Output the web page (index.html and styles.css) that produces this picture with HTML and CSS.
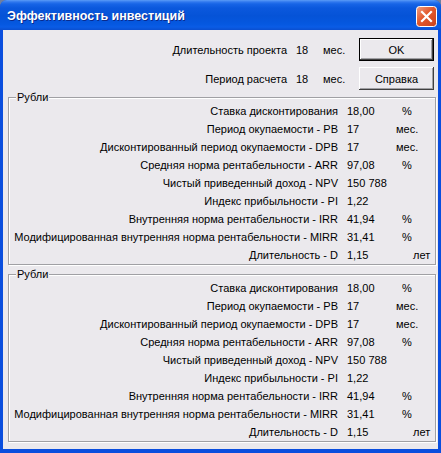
FILE: index.html
```html
<!DOCTYPE html>
<html lang="ru">
<head>
<meta charset="utf-8">
<title>Эффективность инвестиций</title>
<link rel="stylesheet" href="styles.css">
</head>
<body>
<div class="window">
  <div class="titlebar">
    <span class="title">Эффективность инвестиций</span>
    <span class="close">
      <svg width="21" height="21" viewBox="0 0 21 21">
        <defs>
          <linearGradient id="cg" x1="0" y1="0" x2="1" y2="1">
            <stop offset="0" stop-color="#f0a184"/>
            <stop offset="0.45" stop-color="#e2582c"/>
            <stop offset="1" stop-color="#c8421c"/>
          </linearGradient>
        </defs>
        <rect x="0.5" y="0.5" width="20" height="20" rx="3" fill="url(#cg)" stroke="#fff"/>
        <path d="M6 6 L15 15 M15 6 L6 15" stroke="#fff" stroke-width="2.2" stroke-linecap="square"/>
      </svg>
    </span>
  </div>
  <div class="client">
    <div class="top">
      <span class="plabel">Длительность проекта</span><span class="pval">18</span><span class="punit">мес.</span>
      <button class="btn default">OK</button>
      <span class="plabel">Период расчета</span><span class="pval">18</span><span class="punit">мес.</span>
      <button class="btn">Справка</button>
    </div>

    <fieldset class="group">
      <legend>Рубли</legend>
      <div class="rows">
        <span class="lbl">Ставка дисконтирования</span><span class="val">18,00</span><span class="unit pct">%</span>
        <span class="lbl">Период окупаемости - PB</span><span class="val">17</span><span class="unit mes">мес.</span>
        <span class="lbl">Дисконтированный период окупаемости - DPB</span><span class="val">17</span><span class="unit mes">мес.</span>
        <span class="lbl">Средняя норма рентабельности - ARR</span><span class="val">97,08</span><span class="unit pct">%</span>
        <span class="lbl">Чистый приведенный доход - NPV</span><span class="val">150 788</span><span class="unit"></span>
        <span class="lbl">Индекс прибыльности - PI</span><span class="val">1,22</span><span class="unit"></span>
        <span class="lbl">Внутренняя норма рентабельности - IRR</span><span class="val">41,94</span><span class="unit pct">%</span>
        <span class="lbl">Модифицированная внутренняя норма рентабельности - MIRR</span><span class="val">31,41</span><span class="unit pct">%</span>
        <span class="lbl">Длительность - D</span><span class="val">1,15</span><span class="unit let">лет</span>
      </div>
    </fieldset>

    <fieldset class="group second">
      <legend>Рубли</legend>
      <div class="rows">
        <span class="lbl">Ставка дисконтирования</span><span class="val">18,00</span><span class="unit pct">%</span>
        <span class="lbl">Период окупаемости - PB</span><span class="val">17</span><span class="unit mes">мес.</span>
        <span class="lbl">Дисконтированный период окупаемости - DPB</span><span class="val">17</span><span class="unit mes">мес.</span>
        <span class="lbl">Средняя норма рентабельности - ARR</span><span class="val">97,08</span><span class="unit pct">%</span>
        <span class="lbl">Чистый приведенный доход - NPV</span><span class="val">150 788</span><span class="unit"></span>
        <span class="lbl">Индекс прибыльности - PI</span><span class="val">1,22</span><span class="unit"></span>
        <span class="lbl">Внутренняя норма рентабельности - IRR</span><span class="val">41,94</span><span class="unit pct">%</span>
        <span class="lbl">Модифицированная внутренняя норма рентабельности - MIRR</span><span class="val">31,41</span><span class="unit pct">%</span>
        <span class="lbl">Длительность - D</span><span class="val">1,15</span><span class="unit let">лет</span>
      </div>
    </fieldset>
  </div>
</div>
</body>
</html>
```

FILE: styles.css
```css
* { box-sizing: border-box; }

html, body {
  margin: 0;
  padding: 0;
  background: #6f7f9f;
}

.window {
  width: 441px;
  height: 453px;
  display: flex;
  flex-direction: column;
  border-radius: 7px 7px 0 0;
  overflow: hidden;
  background: #0a4ede;
  font-family: "Liberation Sans", Arial, sans-serif;
  font-size: 11px;
  color: #000;
}

.titlebar {
  height: 30px;
  flex: none;
  display: flex;
  align-items: center;
  justify-content: space-between;
  padding: 0 4px 0 7px;
  background: linear-gradient(to bottom,
    #5b9cf7 0px, #2f77ee 2px, #1764e6 4px, #0b58dd 8px,
    #0553d7 16px, #0558e0 24px, #0a5ce6 27px, #0a4fd0 30px);
}

.title {
  color: #fff;
  font-family: "Liberation Sans", Arial, sans-serif;
  font-weight: bold;
  font-size: 12.5px;
  text-shadow: 1px 1px 0 #0a2a8c;
  padding-top: 1px;
}

.close {
  display: flex;
  width: 21px;
  height: 21px;
  margin-top: 2px;
}

.client {
  flex: 1;
  margin: 0 3px 4px 3px;
  background: #ebe9ed;
  padding: 8px 2px 0 5px;
  display: flex;
  flex-direction: column;
  white-space: nowrap;
}

.top {
  display: grid;
  grid-template-columns: 1fr 36px 36px 75px;
  grid-template-rows: 23px 23px;
  row-gap: 6px;
  align-items: center;
  margin-right: 2px;
}

.plabel {
  text-align: right;
}

.pval {
  padding-left: 9px;
}

.btn {
  font-family: "Liberation Sans", Arial, sans-serif;
  font-size: 11px;
  color: #000;
  height: 23px;
  width: 75px;
  padding: 0;
  background: #ebe9ed;
  border: none;
  border-radius: 0;
  box-shadow: inset -1px -1px 0 #404040, inset 1px 1px 0 #ffffff,
              inset -2px -2px 0 #a0a0a4, inset 2px 2px 0 #ebe9ed;
}

.btn.default {
  box-shadow: inset 0 0 0 1px #000, inset -2px -2px 0 #404040,
              inset 2px 2px 0 #ffffff, inset -3px -3px 0 #a0a0a4;
}

.group {
  margin: 1px 0 0 0;
  padding: 0;
  border: 1px solid #a0a0a4;
  box-shadow: inset 1px 1px 0 #fff, 1px 1px 0 #fff;
  min-width: 0;
}

.group.second {
  margin-top: 3px;
}

.group legend {
  padding: 0 1px;
  margin-left: 7px;
  line-height: 13px;
  background: #ebe9ed;
}

.rows {
  display: grid;
  grid-template-columns: 1fr 58px 39px;
  grid-auto-rows: 18px;
  align-items: center;
  margin-top: -2px;
}

.lbl {
  text-align: right;
}

.val {
  padding-left: 9px;
}

.unit.mes { padding-left: 0; }
.unit.pct { padding-left: 6px; }
.unit.let { padding-left: 17px; }
```
